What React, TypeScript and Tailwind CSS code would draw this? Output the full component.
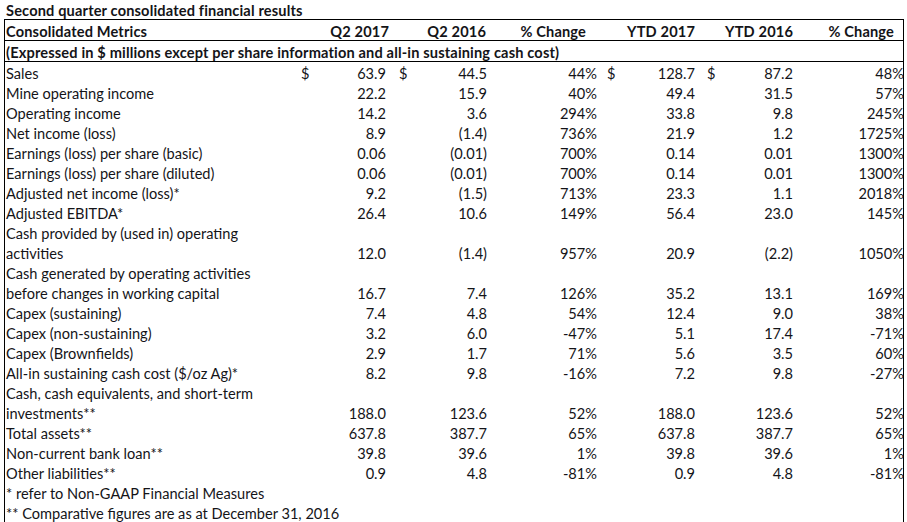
import React from "react";

type Row = {
  label: string;
  v?: [string, string, string, string, string, string];
  dollar?: boolean;
};

const rows: Row[] = [
  { label: "Sales", v: ["63.9", "44.5", "44%", "128.7", "87.2", "48%"], dollar: true },
  { label: "Mine operating income", v: ["22.2", "15.9", "40%", "49.4", "31.5", "57%"] },
  { label: "Operating income", v: ["14.2", "3.6", "294%", "33.8", "9.8", "245%"] },
  { label: "Net income (loss)", v: ["8.9", "(1.4)", "736%", "21.9", "1.2", "1725%"] },
  { label: "Earnings (loss) per share (basic)", v: ["0.06", "(0.01)", "700%", "0.14", "0.01", "1300%"] },
  { label: "Earnings (loss) per share (diluted)", v: ["0.06", "(0.01)", "700%", "0.14", "0.01", "1300%"] },
  { label: "Adjusted net income (loss)*", v: ["9.2", "(1.5)", "713%", "23.3", "1.1", "2018%"] },
  { label: "Adjusted EBITDA*", v: ["26.4", "10.6", "149%", "56.4", "23.0", "145%"] },
  { label: "Cash provided by (used in) operating" },
  { label: "activities", v: ["12.0", "(1.4)", "957%", "20.9", "(2.2)", "1050%"] },
  { label: "Cash generated by operating activities" },
  { label: "before changes in working capital", v: ["16.7", "7.4", "126%", "35.2", "13.1", "169%"] },
  { label: "Capex (sustaining)", v: ["7.4", "4.8", "54%", "12.4", "9.0", "38%"] },
  { label: "Capex (non-sustaining)", v: ["3.2", "6.0", "-47%", "5.1", "17.4", "-71%"] },
  { label: "Capex (Brownfields)", v: ["2.9", "1.7", "71%", "5.6", "3.5", "60%"] },
  { label: "All-in sustaining cash cost ($/oz Ag)*", v: ["8.2", "9.8", "-16%", "7.2", "9.8", "-27%"] },
  { label: "Cash, cash equivalents, and short-term" },
  { label: "investments**", v: ["188.0", "123.6", "52%", "188.0", "123.6", "52%"] },
  { label: "Total assets**", v: ["637.8", "387.7", "65%", "637.8", "387.7", "65%"] },
  { label: "Non-current bank loan**", v: ["39.8", "39.6", "1%", "39.8", "39.6", "1%"] },
  { label: "Other liabilities**", v: ["0.9", "4.8", "-81%", "0.9", "4.8", "-81%"] },
  { label: "* refer to Non-GAAP Financial Measures" },
  { label: "** Comparative figures are as at December 31, 2016" },
];

const grid = "grid grid-cols-[294px_90px_100px_110px_98px_98px_110px]";

export default function App() {
  return (
    <div
      className="w-[907px] h-[522px] overflow-hidden bg-white text-[#141418] text-[14.6px]"
      style={{ fontFamily: "Lato, 'Noto Sans', sans-serif" }}
    >
      <div className="h-[19px] pl-[6px] font-bold leading-[21px] tracking-[0.15px]">
        Second quarter consolidated financial results
      </div>
      <div className="ml-[4px] w-[900px] border-l border-r border-t border-black">
        <div className={`${grid} h-[21px] border-b border-black font-bold leading-[23px] tracking-[0.15px]`}>
          <div className="pl-[1px]">Consolidated Metrics</div>
          <div className="text-right">Q2 2017</div>
          <div className="text-right pr-[3px]">Q2 2016</div>
          <div className="text-right pr-[13px]">% Change</div>
          <div className="text-right pr-[2px]">YTD 2017</div>
          <div className="text-right pr-[2px]">YTD 2016</div>
          <div className="text-right pr-[11px]">% Change</div>
        </div>
        <div className="h-[21px] border-b border-black font-bold leading-[23px] pl-[1px] whitespace-nowrap tracking-[0.15px]">
          (Expressed in $ millions except per share information and all-in sustaining cash cost)
        </div>
        {rows.map((r, i) => (
          <div key={i} className={`${grid} h-[20px] leading-[23px]`}>
            <div className="pl-[1px] whitespace-nowrap">{r.label}</div>
            {r.v && (
              <>
                <div className="flex justify-between pl-[2px] pr-[3px]">
                  <span>{r.dollar ? "$" : ""}</span>
                  <span>{r.v[0]}</span>
                </div>
                <div className="flex justify-between pl-[10px] pr-[2px]">
                  <span>{r.dollar ? "$" : ""}</span>
                  <span>{r.v[1]}</span>
                </div>
                <div className="text-right pr-[2px]">{r.v[2]}</div>
                <div className="flex justify-between pl-[8px] pr-[2px]">
                  <span>{r.dollar ? "$" : ""}</span>
                  <span>{r.v[3]}</span>
                </div>
                <div className="flex justify-between pl-[10px] pr-[2px]">
                  <span>{r.dollar ? "$" : ""}</span>
                  <span>{r.v[4]}</span>
                </div>
                <div className="text-right pr-[1px]">{r.v[5]}</div>
              </>
            )}
          </div>
        ))}
      </div>
    </div>
  );
}
